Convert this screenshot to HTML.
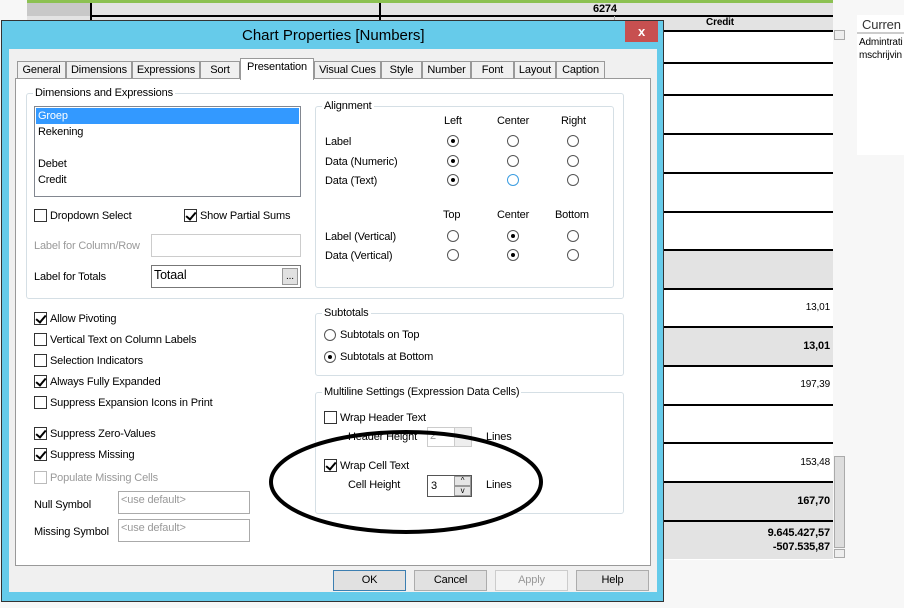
<!DOCTYPE html>
<html><head><meta charset="utf-8"><style>
*{margin:0;padding:0;box-sizing:border-box}
body{width:904px;height:608px;overflow:hidden;background:#f7f7f7;font-family:"Liberation Sans",sans-serif;font-size:11px;letter-spacing:-0.15px;color:#000;position:relative}
.a{position:absolute}
.t{position:absolute;white-space:nowrap;line-height:14px}
.r{position:absolute;white-space:nowrap;line-height:14px;right:74px;text-align:right}
.g{color:#999}
.cb{position:absolute;width:13px;height:13px;border:1px solid #333;background:#fff}
.cb.d{border-color:#bbb}
.ck::after{content:"";position:absolute;left:3px;top:0px;width:4px;height:8px;border:solid #000;border-width:0 2px 2px 0;transform:rotate(40deg)}
.rb{position:absolute;width:12px;height:12px;border:1px solid #555;border-radius:50%;background:#fff}
.rb.on::after{content:"";position:absolute;left:3px;top:3px;width:4px;height:4px;border-radius:50%;background:#000}
.gb{position:absolute;border:1px solid #d5dfe5;border-radius:3px}
.gl{position:absolute;background:#fff;padding:0 2px;line-height:12px;top:-7px;left:6px}
.in{position:absolute;border:1px solid #aaa;background:#fff}
.btn{position:absolute;height:21px;width:73px;border:1px solid #acacac;background:#e1e1e1;text-align:center;line-height:19px}
.tab{position:absolute;top:61px;height:18px;border:1px solid #999;border-bottom:none;background:#f0f0f0;line-height:16px;text-align:center}
.row{position:absolute;left:660px;width:173px;border-top:2px solid #000}
</style></head><body>
<div class="a" style="left:27px;top:0;width:806px;height:3px;background:#8cc152"></div>
<div class="a" style="left:27px;top:3px;width:806px;height:28px;background:#e3e3e3"></div>
<div class="a" style="left:27px;top:3px;width:63px;height:13px;background:#c8c8c8"></div>
<div class="a" style="left:90px;top:3px;width:2px;height:28px;background:#000"></div>
<div class="a" style="left:379px;top:3px;width:2px;height:28px;background:#000"></div>
<div class="a" style="left:92px;top:15px;width:741px;height:2px;background:#000"></div>
<div class="t" style="left:593px;top:2px;font-weight:bold;font-size:11px">6274</div>
<div class="a" style="left:614px;top:16px;width:1px;height:15px;background:#aaa"></div>
<div class="t" style="left:706px;top:16px;font-weight:bold;font-size:10px">Credit</div>
<div class="a" style="left:660px;top:30px;width:173px;height:530px;background:#fff"></div>
<div class="row" style="top:30px;height:32px"></div>
<div class="row" style="top:62px;height:32px"></div>
<div class="row" style="top:94px;height:39px"></div>
<div class="row" style="top:133px;height:39px"></div>
<div class="row" style="top:172px;height:39px"></div>
<div class="row" style="top:211px;height:38px"></div>
<div class="row" style="top:249px;height:39px;background:#e3e3e3"></div>
<div class="row" style="top:288px;height:38px"></div>
<div class="row" style="top:326px;height:39px;background:#e3e3e3"></div>
<div class="row" style="top:365px;height:39px"></div>
<div class="row" style="top:404px;height:38px"></div>
<div class="row" style="top:442px;height:39px"></div>
<div class="row" style="top:481px;height:39px;background:#e3e3e3"></div>
<div class="row" style="top:520px;height:39px;background:#e3e3e3"></div>
<div class="r" style="top:301px;font-size:10px">13,01</div>
<div class="r" style="top:339px;font-weight:bold">13,01</div>
<div class="r" style="top:378px;font-size:10px">197,39</div>
<div class="r" style="top:456px;font-size:10px">153,48</div>
<div class="r" style="top:494px;font-weight:bold">167,70</div>
<div class="r" style="top:526px;font-weight:bold">9.645.427,57</div>
<div class="r" style="top:540px;font-weight:bold">-507.535,87</div>
<div class="a" style="left:834px;top:30px;width:11px;height:10px;border:1px solid #aaa;background:#eee"></div>
<div class="a" style="left:834px;top:456px;width:11px;height:92px;border:1px solid #aaa;background:#ddd"></div>
<div class="a" style="left:834px;top:549px;width:11px;height:9px;border:1px solid #aaa;background:#eee"></div>
<div class="a" style="left:857px;top:15px;width:47px;height:140px;background:#fff"></div>
<div class="t" style="left:862px;top:18px;font-size:13px;color:#333">Curren</div>
<div class="a" style="left:857px;top:32px;width:47px;height:2px;background:#ccc"></div>
<div class="t" style="left:859px;top:36px;font-size:10px">Admintrati</div>
<div class="t" style="left:859px;top:49px;font-size:10px">mschrijvin</div>

<div class="a" style="left:1px;top:20px;width:663px;height:582px;background:#66cbea;border:1px solid #333"></div>
<div class="t" style="left:242px;top:27px;font-size:15px;line-height:18px;letter-spacing:0">Chart Properties [Numbers]</div>
<div class="a" style="left:625px;top:21px;width:33px;height:21px;background:#c75050;color:#fff;font-weight:bold;text-align:center;line-height:21px;font-size:13px">x</div>
<div class="a" style="left:9px;top:49px;width:648px;height:543px;background:#f0f0f0"></div>
<div class="tab" style="left:17px;width:49px">General</div>
<div class="tab" style="left:66px;width:66px">Dimensions</div>
<div class="tab" style="left:132px;width:68px">Expressions</div>
<div class="tab" style="left:200px;width:40px">Sort</div>
<div class="tab" style="left:314px;width:67px">Visual Cues</div>
<div class="tab" style="left:381px;width:41px">Style</div>
<div class="tab" style="left:422px;width:49px">Number</div>
<div class="tab" style="left:471px;width:43px">Font</div>
<div class="tab" style="left:514px;width:42px">Layout</div>
<div class="tab" style="left:556px;width:49px">Caption</div>
<div class="a" style="left:15px;top:78px;width:636px;height:488px;background:#fff;border:1px solid #999"></div>
<div class="tab" style="left:240px;top:58px;width:74px;height:22px;background:#fff;border-color:#999">Presentation</div>

<div class="gb" style="left:26px;top:93px;width:598px;height:206px"><span class="gl">Dimensions and Expressions</span></div>
<div class="a" style="left:34px;top:106px;width:267px;height:91px;border:1px solid #828790;background:#fff"></div>
<div class="a" style="left:36px;top:108px;width:263px;height:16px;background:#3399ff"></div>
<div class="t" style="left:38px;top:109px;color:#fff">Groep</div>
<div class="t" style="left:38px;top:125px">Rekening</div>
<div class="t" style="left:38px;top:157px">Debet</div>
<div class="t" style="left:38px;top:173px">Credit</div>
<div class="cb" style="left:34px;top:209px"></div><div class="t" style="left:50px;top:209px">Dropdown Select</div>
<div class="cb ck" style="left:184px;top:209px"></div><div class="t" style="left:200px;top:209px">Show Partial Sums</div>
<div class="t g" style="left:34px;top:239px">Label for Column/Row</div>
<div class="in" style="left:151px;top:234px;width:150px;height:23px;border-color:#ccc"></div>
<div class="t" style="left:34px;top:270px">Label for Totals</div>
<div class="in" style="left:151px;top:265px;width:150px;height:23px;border-color:#777"></div>
<div class="t" style="left:154px;top:268px;font-size:12.5px">Totaal</div>
<div class="a" style="left:282px;top:268px;width:16px;height:17px;border:1px solid #999;background:#e1e1e1;text-align:center;font-size:10px;line-height:15px">...</div>

<div class="gb" style="left:315px;top:106px;width:299px;height:182px"><span class="gl">Alignment</span></div>
<div class="t" style="left:444px;top:114px">Left</div><div class="t" style="left:497px;top:114px">Center</div><div class="t" style="left:561px;top:114px">Right</div>
<div class="t" style="left:325px;top:135px">Label</div>
<div class="t" style="left:325px;top:155px">Data (Numeric)</div>
<div class="t" style="left:325px;top:174px">Data (Text)</div>
<div class="rb on" style="left:447px;top:135px"></div><div class="rb" style="left:507px;top:135px"></div><div class="rb" style="left:567px;top:135px"></div>
<div class="rb on" style="left:447px;top:155px"></div><div class="rb" style="left:507px;top:155px"></div><div class="rb" style="left:567px;top:155px"></div>
<div class="rb on" style="left:447px;top:174px"></div><div class="rb" style="left:507px;top:174px;border-color:#3b9de1"></div><div class="rb" style="left:567px;top:174px"></div>
<div class="t" style="left:443px;top:208px">Top</div><div class="t" style="left:497px;top:208px">Center</div><div class="t" style="left:555px;top:208px">Bottom</div>
<div class="t" style="left:325px;top:230px">Label (Vertical)</div>
<div class="t" style="left:325px;top:249px">Data (Vertical)</div>
<div class="rb" style="left:447px;top:230px"></div><div class="rb on" style="left:507px;top:230px"></div><div class="rb" style="left:567px;top:230px"></div>
<div class="rb" style="left:447px;top:249px"></div><div class="rb on" style="left:507px;top:249px"></div><div class="rb" style="left:567px;top:249px"></div>

<div class="cb ck" style="left:34px;top:312px"></div><div class="t" style="left:50px;top:312px">Allow Pivoting</div>
<div class="cb" style="left:34px;top:333px"></div><div class="t" style="left:50px;top:333px">Vertical Text on Column Labels</div>
<div class="cb" style="left:34px;top:354px"></div><div class="t" style="left:50px;top:354px">Selection Indicators</div>
<div class="cb ck" style="left:34px;top:375px"></div><div class="t" style="left:50px;top:375px">Always Fully Expanded</div>
<div class="cb" style="left:34px;top:396px"></div><div class="t" style="left:50px;top:396px">Suppress Expansion Icons in Print</div>
<div class="cb ck" style="left:34px;top:427px"></div><div class="t" style="left:50px;top:427px">Suppress Zero-Values</div>
<div class="cb ck" style="left:34px;top:448px"></div><div class="t" style="left:50px;top:448px">Suppress Missing</div>
<div class="cb d" style="left:34px;top:471px"></div><div class="t g" style="left:50px;top:471px">Populate Missing Cells</div>
<div class="t" style="left:34px;top:498px">Null Symbol</div>
<div class="in" style="left:118px;top:491px;width:132px;height:23px"></div><div class="t g" style="left:121px;top:493px;font-size:11px">&lt;use default&gt;</div>
<div class="t" style="left:34px;top:525px">Missing Symbol</div>
<div class="in" style="left:118px;top:519px;width:132px;height:23px"></div><div class="t g" style="left:121px;top:521px;font-size:11px">&lt;use default&gt;</div>

<div class="gb" style="left:315px;top:313px;width:309px;height:63px"><span class="gl">Subtotals</span></div>
<div class="rb" style="left:324px;top:329px"></div><div class="t" style="left:340px;top:328px">Subtotals on Top</div>
<div class="rb on" style="left:324px;top:351px"></div><div class="t" style="left:340px;top:350px">Subtotals at Bottom</div>

<div class="gb" style="left:315px;top:392px;width:309px;height:122px"><span class="gl">Multiline Settings (Expression Data Cells)</span></div>
<div class="cb" style="left:324px;top:411px"></div><div class="t" style="left:340px;top:411px">Wrap Header Text</div>
<div class="t" style="left:348px;top:430px">Header Height</div>
<div class="in" style="left:427px;top:427px;width:45px;height:20px;border-color:#ccc"></div><div class="t g" style="left:430px;top:429px">2</div>
<div class="a" style="left:454px;top:428px;width:17px;height:18px;border-left:1px solid #ccc;background:#eee"></div>
<div class="t" style="left:486px;top:430px">Lines</div>
<div class="cb ck" style="left:324px;top:459px"></div><div class="t" style="left:340px;top:459px">Wrap Cell Text</div>
<div class="t" style="left:348px;top:478px">Cell Height</div>
<div class="in" style="left:427px;top:475px;width:45px;height:22px;border-color:#555"></div><div class="t" style="left:431px;top:479px">3</div>
<div class="a" style="left:454px;top:476px;width:17px;height:10px;border:1px solid #999;background:#e5e5e5;font-size:8px;text-align:center;line-height:8px">^</div>
<div class="a" style="left:454px;top:486px;width:17px;height:10px;border:1px solid #999;background:#e5e5e5;font-size:8px;text-align:center;line-height:8px">v</div>
<div class="t" style="left:486px;top:478px">Lines</div>

<svg class="a" style="left:0;top:0" width="904" height="608"><ellipse cx="406" cy="482" rx="135" ry="50" fill="none" stroke="#000" stroke-width="4"/></svg>

<div class="btn" style="left:333px;top:570px;border-color:#3c7fb1">OK</div>
<div class="btn" style="left:414px;top:570px">Cancel</div>
<div class="btn" style="left:495px;top:570px;background:#f4f4f4;border-color:#ccc;color:#999">Apply</div>
<div class="btn" style="left:576px;top:570px">Help</div>
</body></html>
